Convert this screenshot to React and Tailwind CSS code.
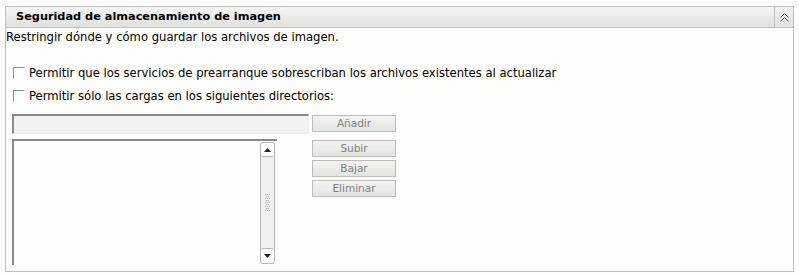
import React from "react";

function Check() {
  return (
    <span className="block w-[12px] h-[12px] border-t border-l border-[#8c8c8c] border-r border-b border-r-[#fdfdfb] border-b-[#fdfdfb] bg-[#fdfdfb] shrink-0" />
  );
}

function Btn({ children }) {
  return (
    <button className="block w-[84px] h-[17px] border border-[#bdbdb5] bg-gradient-to-b from-[#f4f5f2] to-[#e2e4df] text-[10.5px] leading-[15px] text-[#808080] text-center">
      {children}
    </button>
  );
}

export default function App() {
  return (
    <div
      className="w-[799px] h-[276px] bg-[#fdfdfb] pt-[6px] px-[5px]"
      style={{ fontFamily: '"DejaVu Sans", sans-serif' }}
    >
      <div className="h-[266px] border border-[#bfbfb8] bg-[#fdfdfb] flex flex-col">
        {/* header */}
        <div className="h-[21px] flex border-b border-[#bfbfb8] bg-gradient-to-b from-[#f5f6f3] to-[#dfe1dc]">
          <div className="flex-1 pl-[10px] text-[11.3px] font-bold leading-[20px] text-black">
            Seguridad de almacenamiento de imagen
          </div>
          <div className="w-[19px] border-l border-[#bfbfb8] flex items-center justify-center">
            <svg width="9" height="9" viewBox="0 0 9 9" fill="none" stroke="#555" strokeWidth="1">
              <path d="M0.5 4.5 L4.5 0.5 L8.5 4.5" />
              <path d="M0.5 8.5 L4.5 4.5 L8.5 8.5" />
            </svg>
          </div>
        </div>

        <div className="text-[11.6px] leading-[16px] text-black pt-[1px]">
          Restringir dónde y cómo guardar los archivos de imagen.
        </div>

        <div className="pl-[7px] pt-[20px] flex flex-col gap-[7px] text-[11.6px] leading-[16px] text-black">
          <label className="flex items-center gap-[4px]">
            <Check />
            Permitir que los servicios de prearranque sobrescriban los archivos existentes al actualizar
          </label>
          <label className="flex items-center gap-[4px]">
            <Check />
            Permitir sólo las cargas en los siguientes directorios:
          </label>
        </div>

        <div className="pl-[6px] pt-[10px] flex gap-[3px] items-start">
          <div className="w-[297px] h-[20px] border-t-2 border-l-2 border-[#8a8a8a] border-r border-b border-r-[#eeeeee] border-b-[#eeeeee] bg-[#f2f3f0]" />
          <div className="pt-[1px]">
            <Btn>Añadir</Btn>
          </div>
        </div>

        <div className="pl-[6px] pt-[5px] flex gap-[35px] items-start">
          <div className="w-[265px] h-[126px] border-t-2 border-l-2 border-[#8a8a8a] bg-[#fdfdfb] flex justify-end pr-[2px] pt-[1px]">
            <div className="w-[15px] h-[122px] flex flex-col border border-[#b5b5b5] rounded-[3px] bg-[#f0f1ee]">
              <div className="h-[14px] border-b border-[#b5b5b5] rounded-[3px] bg-white flex items-center justify-center">
                <svg width="7" height="4" viewBox="0 0 7 4"><path d="M0 4 L3.5 0 L7 4Z" fill="#222" /></svg>
              </div>
              <div className="flex-1 flex items-center justify-center">
                <svg width="5" height="18" viewBox="0 0 5 18" fill="#aaa">
                  {[0, 2, 4, 6, 8, 10, 12, 14, 16].map((y) => (
                    <g key={y}>
                      <rect x={y % 4 === 0 ? 0 : 1} y={y} width="1" height="1" />
                      <rect x={y % 4 === 0 ? 2 : 3} y={y} width="1" height="1" />
                      {y % 4 === 0 && <rect x="4" y={y} width="1" height="1" />}
                    </g>
                  ))}
                </svg>
              </div>
              <div className="h-[15px] border-t border-[#b5b5b5] rounded-[3px] bg-white flex items-center justify-center">
                <svg width="7" height="4" viewBox="0 0 7 4"><path d="M0 0 L3.5 4 L7 0Z" fill="#222" /></svg>
              </div>
            </div>
          </div>
          <div className="flex flex-col gap-[3px] pt-[1px]">
            <Btn>Subir</Btn>
            <Btn>Bajar</Btn>
            <Btn>Eliminar</Btn>
          </div>
        </div>
      </div>
    </div>
  );
}
